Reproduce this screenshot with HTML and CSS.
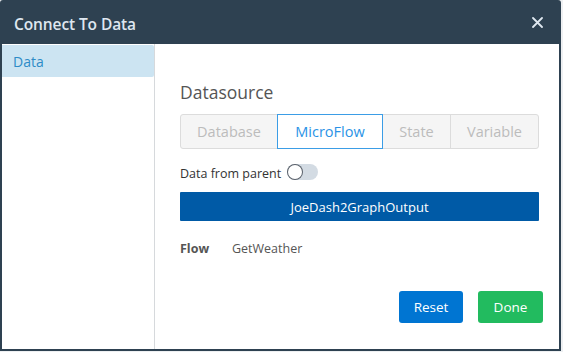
FILE: index.html
```html
<!DOCTYPE html>
<html>
<head>
<meta charset="utf-8">
<link rel="stylesheet" href="styles.css">
</head>
<body>
<div class="dialog">
  <div class="header">
    <span class="title">Connect To Data</span>
    <svg class="close" width="11" height="11" viewBox="0 0 11 11"><path d="M1 1L10 10M10 1L1 10" stroke="#dfe7f0" stroke-width="1.8" stroke-linecap="round"/></svg>
  </div>
  <div class="body">
    <div class="sidebar">
      <div class="side-item active">Data</div>
    </div>
    <div class="main">
      <div class="heading">Datasource</div>
      <div class="tabs">
        <div class="tab t1">Database</div>
        <div class="tab t2 active">MicroFlow</div>
        <div class="tab t3">State</div>
        <div class="tab t4">Variable</div>
      </div>
      <div class="parent-row">
        <span>Data from parent</span>
        <span class="toggle"><span class="knob"></span></span>
      </div>
      <div class="selected">JoeDash2GraphOutput</div>
      <div class="flow-row">
        <span class="flow-label">Flow</span>
        <span class="flow-value">GetWeather</span>
      </div>
      <div class="actions">
        <button class="btn reset">Reset</button>
        <button class="btn done">Done</button>
      </div>
    </div>
  </div>
</div>
</body>
</html>
```
FILE: styles.css
```css
html, body {
  margin: 0;
  padding: 0;
  background: #eef0f2;
  font-family: "Open Sans", "Noto Sans", sans-serif;
}
.dialog {
  width: 561px;
  height: 351px;
  display: flex;
  flex-direction: column;
  background: #2e4151;
  border-radius: 3px 3px 0 0;
  box-sizing: border-box;
}
.header {
  height: 44px;
  flex: none;
  display: flex;
  align-items: center;
  justify-content: space-between;
  padding: 3px 18px 0 14px;
  box-sizing: border-box;
}
.title {
  color: #dfe7f0;
  font-size: 15.5px;
  font-weight: 600;
  letter-spacing: -0.1px;
}
.close {
  display: block;
  margin-top: -2px;
}
.body {
  flex: 1;
  display: flex;
  background: #fff;
  margin: 0 2px 2px 2px;
}
.sidebar {
  width: 152px;
  flex: none;
  border-right: 1px solid #d6d9dc;
  padding-top: 1px;
}
.side-item {
  height: 32px;
  line-height: 34px;
  padding-left: 11px;
  font-size: 14px;
  color: #2d8bc7;
}
.side-item.active {
  background: #cce4f2;
  border-radius: 0 2px 2px 0;
}
.main {
  flex: 1;
  padding: 36px 20px 0 25px;
  display: flex;
  flex-direction: column;
}
.heading {
  font-size: 17.5px;
  color: #555;
  line-height: 24px;
  margin-bottom: 10px;
}
.tabs {
  display: flex;
  height: 35px;
  border: 1px solid #dcdcdc;
  border-radius: 3px;
  background: #f5f5f5;
  box-sizing: border-box;
}
.tab {
  display: flex;
  align-items: center;
  justify-content: center;
  font-size: 14.5px;
  color: #bcbcbc;
  box-sizing: border-box;
}
.t1 { width: 96px; }
.t2 { width: 106px; }
.t3 { width: 68px; border-right: 1px solid #dcdcdc; }
.t4 { flex: 1; }
.tab.active {
  background: #fff;
  color: #2a93e6;
  border: 1px solid #3b9de6;
  margin: -1px 0;
  height: 35px;
}
.parent-row {
  display: flex;
  align-items: center;
  margin-top: 15px;
  height: 18px;
  font-size: 12.5px;
  color: #333;
}
.toggle {
  width: 31px;
  height: 16px;
  border-radius: 8px;
  background: #d3dbe3;
  margin-left: 6px;
  position: relative;
  margin-top: -2px;
}
.knob {
  position: absolute;
  left: 1px;
  top: 1px;
  width: 14px;
  height: 14px;
  border-radius: 50%;
  background: #fff;
  box-shadow: 0 0 0 1px #59606a;
}
.selected {
  margin-top: 10px;
  height: 29px;
  background: #005aa6;
  color: #fff;
  font-size: 13px;
  display: flex;
  align-items: center;
  justify-content: center;
  border-radius: 1px;
}
.flow-row {
  margin-top: 19px;
  display: flex;
  font-size: 12.5px;
  color: #555;
}
.flow-label {
  font-weight: 700;
  width: 52px;
}
.actions {
  margin-top: 34px;
  display: flex;
  justify-content: flex-end;
  gap: 15px;
}
.btn {
  width: 64px;
  height: 32px;
  border: none;
  border-radius: 3px;
  color: #fff;
  font-family: "Open Sans", "Noto Sans", sans-serif;
  font-size: 13.5px;
  padding: 0;
}
.reset { background: #0075d2; }
.done { background: #22bb5f; width: 65px; margin-right: -4px; }
```
